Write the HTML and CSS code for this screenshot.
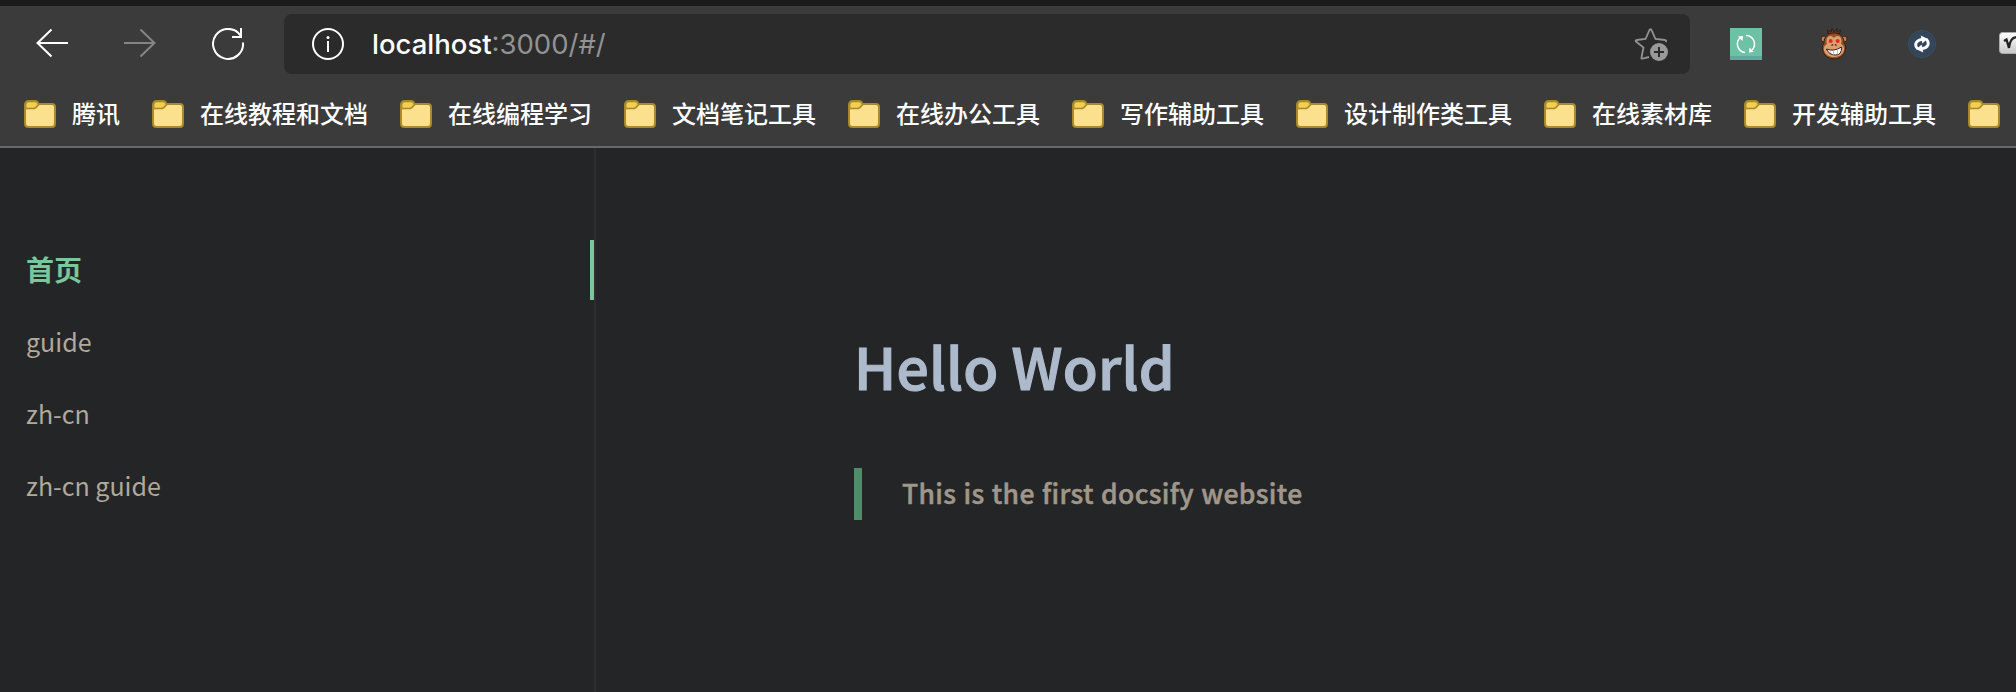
FILE: index.html
```html
<!DOCTYPE html>
<html lang="zh-CN">
<head>
<meta charset="utf-8">
<title>Hello World</title>
<link rel="stylesheet" href="styles.css">
</head>
<body>
<svg class="defs" width="0" height="0">
  <symbol id="folder" viewBox="0 0 32 28">
    <path d="M1 5.500Q1 1 5 1H11Q13.500 1 14.500 4H28Q31 4 31 7V23.500Q31 27 28 27H4.500Q1 27 1 23.500Z" fill="#fbe18d" stroke="#ab892b" stroke-width="2"/>
    <path d="M1.500 8.500V5.500Q1.500 1.500 5 1.500H11Q13.500 1.500 14.500 4.500L12 7.500Q11 8.500 9.500 8.500Z" fill="#f1cf55" stroke="#ab892b" stroke-width="1.700"/>
  </symbol>
</svg>
<header class="browser">
  <div class="toolbar">
    <nav class="controls">
      <svg width="32" height="32" viewBox="0 0 32 32" fill="none" stroke="#fff" stroke-width="2"><path d="M32 15H1M15.500 1.500L1.500 15L15.500 28.500"/></svg>
      <svg width="32" height="32" viewBox="0 0 32 32" fill="none" stroke="#858585" stroke-width="2"><path d="M0 15H31M16.500 1.500L30.500 15L16.500 28.500"/></svg>
      <svg width="32" height="32" viewBox="0 0 32 32" fill="none" stroke="#fff" stroke-width="2"><path d="M31 14.500A15 15 0 1 1 28.500 7.500M29 0V9H20"/></svg>
    </nav>
    <div class="address">
      <svg width="32" height="32" viewBox="0 0 32 32" fill="none" stroke="#fff" stroke-width="2"><circle cx="16" cy="16" r="15"/><path d="M16 13V24"/><circle cx="16" cy="9.500" r="1.500" fill="#fff" stroke="none"/></svg>
      <span class="url"><b>localhost</b>:3000/#/</span>
      <svg class="star" width="36" height="36" viewBox="0 0 36 36"><path d="M15 31L8.500 32.500Q7 33 7.500 31.500L9.500 21.500L2 15.500Q1 14.500 2.500 14L11.500 13L15.500 4Q16.500 2.500 17.500 4L21.500 13L31 14Q33 14.500 31.500 16" fill="none" stroke="#929292" stroke-width="1.800"/><circle cx="25" cy="26" r="9" fill="#999"/><path d="M20 26H30M25 21V31" stroke="#2b2b2b" stroke-width="2"/></svg>
    </div>
    <div class="extensions">
      <svg width="32" height="32" viewBox="0 0 32 32"><path d="M0 0H32V32H0Z" fill="#6dc1a4"/><path d="M0 28H32V32H0Z" fill="#60a9a0"/><g fill="none" stroke="#fff" stroke-width="1.500"><path d="M15 24.500A8.500 8.500 0 0 1 10.500 9.500M16 7.500A8.500 8.500 0 0 1 22 22"/></g><path d="M8 8.500L13 8L12.500 13ZM19.500 19.500L24 24L19 24.500Z" fill="#fff"/></svg>
      <svg width="32" height="32" viewBox="0 0 32 32"><path d="M10 6L9.500 2L13 4L14 0.500L16 4L19 0.500V4L22.500 2L21.500 6Z" fill="#6b3418" stroke="#282220"/><circle cx="6" cy="11" r="3" fill="#c47a4c" stroke="#38251d"/><circle cx="26" cy="11" r="3" fill="#c47a4c" stroke="#38251d"/><path d="M16 5C7 5 6 12 6 15C2 19 5 31 16 31C27 31 30 19 26 15C26 12 25 5 16 5Z" fill="#925026" stroke="#302018"/><path d="M16 10C12 5.500 7 9 9 16C3 19 6 29 16 29C26 29 29 19 23 16C25 9 20 5.500 16 10Z" fill="#dc9f70"/><circle cx="12.700" cy="13" r="2" fill="#df2d20"/><circle cx="19.700" cy="13" r="2" fill="#df2d20"/><path d="M13.500 17.500L15 16.500M18.500 17.500L17 16.500" stroke="#4b1714" stroke-width="1.500"/><path d="M8.500 21Q16 24 23.500 19Q24 27 17.500 27Q11 27 8.500 21Z" fill="#fff" stroke="#372017"/><path d="M12 22.500V25M15.500 22.500V27M19.500 21.500V26.500" stroke="#aaa" stroke-width="0.700"/></svg>
      <svg width="32" height="32" viewBox="0 0 32 32"><circle cx="16" cy="16" r="13.500" fill="#39414a" stroke="#34516a"/><circle cx="16" cy="16" r="11.500" fill="#34465b" stroke="#304b64"/><g transform="rotate(-12 16 16)" fill="none" stroke="#fff" stroke-width="2.800"><path d="M11 20C7.500 15 11 11 17 11.500M21 12C24.500 17 21 21 15 20.500"/><path d="M16.500 7.500L22.500 12L16.500 15.500ZM15.500 24.500L9.500 20L15.500 16.500Z" fill="#fff" stroke="none"/></g></svg>
      <svg width="32" height="32" viewBox="0 0 32 32"><defs><linearGradient id="key" x2="0" y2="1"><stop stop-color="#fff"/><stop offset="1" stop-color="#c8c8c8"/></linearGradient></defs><rect x="5.500" y="4.500" width="40" height="21" rx="3" fill="url(#key)" stroke="#aaa"/><path d="M10 13L12.500 11.500L15 20Q16 9 23 9" fill="none" stroke="#222" stroke-width="2.300"/></svg>
    </div>
  </div>
  <nav class="bookmarks">
    <a><svg><use href="#folder"/></svg><span>腾讯</span></a>
    <a><svg><use href="#folder"/></svg><span>在线教程和文档</span></a>
    <a><svg><use href="#folder"/></svg><span>在线编程学习</span></a>
    <a><svg><use href="#folder"/></svg><span>文档笔记工具</span></a>
    <a><svg><use href="#folder"/></svg><span>在线办公工具</span></a>
    <a><svg><use href="#folder"/></svg><span>写作辅助工具</span></a>
    <a><svg><use href="#folder"/></svg><span>设计制作类工具</span></a>
    <a><svg><use href="#folder"/></svg><span>在线素材库</span></a>
    <a><svg><use href="#folder"/></svg><span>开发辅助工具</span></a>
    <a><svg><use href="#folder"/></svg></a>
  </nav>
</header>
<div class="page">
  <aside class="sidebar">
    <a class="active">首页</a>
    <a>guide</a>
    <a>zh-cn</a>
    <a>zh-cn guide</a>
  </aside>
  <main class="content">
    <h1>Hello World</h1>
    <blockquote>This is the first docsify website</blockquote>
  </main>
</div>
</body>
</html>
```
FILE: styles.css
```css
* { box-sizing: border-box; }
body {
  margin: 0;
  height: 692px;
  display: flex;
  flex-direction: column;
  overflow: hidden;
  background: #232527;
  font-family: "Noto Sans CJK SC", sans-serif;
}
svg { display: block; flex: none; }
.defs { position: absolute; }
.browser {
  height: 148px;
  flex: none;
  border-top: 6px solid #1b1b1b;
  border-bottom: 2px solid #696969;
  background: #3b3b3b;
}
.toolbar { height: 76px; display: flex; align-items: center; }
.controls { width: 284px; flex: none; padding-left: 36px; display: flex; gap: 56px; }
.address {
  width: 1406px;
  height: 60px;
  flex: none;
  padding: 0 20px 0 28px;
  display: flex;
  align-items: center;
  border-radius: 8px;
  background: #2b2b2b;
}
.url {
  margin-left: 28px;
  font-family: Inter, sans-serif;
  font-size: 27.5px;
  color: #929292;
}
.url b { font-weight: 500; color: #fff; }
.star { margin-left: auto; }
.extensions { flex: none; padding-left: 40px; display: flex; gap: 56px; }
.bookmarks {
  height: 64px;
  padding: 0 0 0 24px;
  display: flex;
  align-items: center;
  gap: 32px;
}
.bookmarks a {
  display: flex;
  align-items: center;
  gap: 16px;
  flex: none;
  font-size: 24px;
  line-height: 26px;
  font-weight: 500;
  color: #fff;
}
.bookmarks span { padding-bottom: 2px; }
.bookmarks svg { width: 32px; height: 28px; }
.page { flex: 1; display: flex; }
.sidebar {
  width: 596px;
  padding-top: 92px;
  display: flex;
  flex-direction: column;
  gap: 12px;
  border-right: 2px solid #2b2d2f;
}
.sidebar a {
  height: 60px;
  padding-left: 26px;
  line-height: 58px;
  font-size: 25px;
  color: #b2a89b;
}
.sidebar .active {
  font-size: 28px;
  font-weight: 600;
  line-height: 58px;
  color: #7bc69b;
  border-right: 4px solid #7bc69b;
}
.content { padding: 172px 0 0 258px; }
h1 {
  margin: 0;
  height: 90px;
  line-height: 90px;
  font-size: 57px;
  font-weight: 500;
  letter-spacing: 0.2px;
  -webkit-text-stroke: 1.2px #adbacc;
  color: #adbacc;
  white-space: nowrap;
}
blockquote {
  margin: 58px 0 0;
  height: 52px;
  padding-left: 40px;
  border-left: 8px solid #508c69;
  line-height: 50px;
  font-size: 26.5px;
  font-weight: 500;
  letter-spacing: 0.36px;
  word-spacing: 0.8px;
  -webkit-text-stroke: 0.5px #a0978a;
  color: #a0978a;
  white-space: nowrap;
}
```
